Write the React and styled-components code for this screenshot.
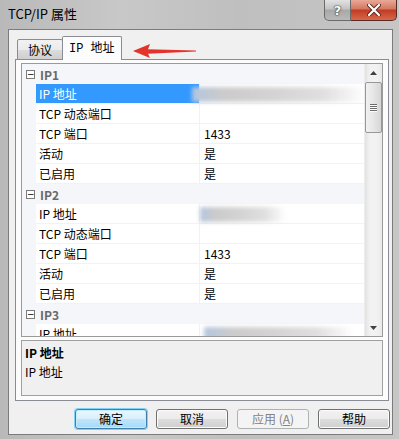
import styled, { createGlobalStyle } from "styled-components";

const GlobalStyle = createGlobalStyle`
  html, body { margin: 0; padding: 0; }
  body {
    font-family: "Noto Sans CJK SC", "Noto Sans", sans-serif;
    font-size: 12px;
    color: #000;
  }
`;

const groups = [
  {
    name: "IP1",
    rows: [
      { label: "IP 地址", smear: { x: -12, w: 174 }, selected: true },
      { label: "TCP 动态端口" },
      { label: "TCP 端口", value: "1433" },
      { label: "活动", value: "是" },
      { label: "已启用", value: "是" },
    ],
  },
  {
    name: "IP2",
    rows: [
      { label: "IP 地址", smear: { x: -4, w: 86 } },
      { label: "TCP 动态端口" },
      { label: "TCP 端口", value: "1433" },
      { label: "活动", value: "是" },
      { label: "已启用", value: "是" },
    ],
  },
  {
    name: "IP3",
    rows: [{ label: "IP 地址", smear: { x: 0, w: 150 } }],
  },
];

const App = () => {
  return (
    <>
      <GlobalStyle />
      <Window>
        <TitleBar>
          <Title>TCP/IP 属性</Title>
          <Caption>
            <HelpButton>?</HelpButton>
            <CloseButton>
              <svg width="14" height="12" viewBox="0 0 14 12">
                <path d="M2 1 L12 11 M12 1 L2 11" stroke="#5a2a20" strokeWidth="4" strokeLinecap="round" />
                <path d="M2 1 L12 11 M12 1 L2 11" stroke="#fff" strokeWidth="2.2" strokeLinecap="round" />
              </svg>
            </CloseButton>
          </Caption>
        </TitleBar>
        <Arrow width="68" height="18" viewBox="0 0 68 18">
          <path d="M1 9 L18 2 L16 7.2 L64 8.4 L64 9.6 L16 11.8 L18 16 Z" fill="#e3342c" />
        </Arrow>
        <Client>
          <TabStrip>
            <Tab>协议</Tab>
            <Tab $active>IP 地址</Tab>
          </TabStrip>
          <Panel>
            <Grid>
              <Rows>
                {groups.map((g) => (
                  <div key={g.name}>
                    <CategoryRow>
                      <Gutter>
                        <Toggle>−</Toggle>
                      </Gutter>
                      <CategoryName>{g.name}</CategoryName>
                    </CategoryRow>
                    {g.rows.map((r, i) => (
                      <PropRow key={i}>
                        <Gutter />
                        <Label $selected={r.selected}>{r.label}</Label>
                        <Value>
                          {r.smear ? (
                            <Smear style={{ marginLeft: r.smear.x, width: r.smear.w }} />
                          ) : (
                            r.value
                          )}
                        </Value>
                      </PropRow>
                    ))}
                  </div>
                ))}
              </Rows>
              <ScrollBar>
                <ScrollArrow>
                  <svg width="7" height="4" viewBox="0 0 7 4">
                    <path d="M0 4 L3.5 0 L7 4 Z" fill="#404040" />
                  </svg>
                </ScrollArrow>
                <Thumb>
                  <Grip />
                  <Grip />
                  <Grip />
                  <Grip />
                </Thumb>
                <Track />
                <ScrollArrow>
                  <svg width="7" height="4" viewBox="0 0 7 4">
                    <path d="M0 0 L7 0 L3.5 4 Z" fill="#404040" />
                  </svg>
                </ScrollArrow>
              </ScrollBar>
            </Grid>
            <Description>
              <DescTitle>IP 地址</DescTitle>
              <DescText>IP 地址</DescText>
            </Description>
          </Panel>
          <Buttons>
            <Button $default>确定</Button>
            <Button>取消</Button>
            <Button disabled>
              应用 (<u>A</u>)
            </Button>
            <Button>帮助</Button>
          </Buttons>
        </Client>
      </Window>
    </>
  );
};

const Window = styled.div`
  position: relative;
  width: 399px;
  height: 439px;
  box-sizing: border-box;
  padding: 0 6px 4px 8px;
  display: flex;
  flex-direction: column;
  background: linear-gradient(to right, #b9b9b9, #c8c8c8 30%, #bfbfbf 60%, #c6c6c6);
  overflow: hidden;
`;

const TitleBar = styled.div`
  height: 29px;
  display: flex;
  align-items: flex-start;
`;

const Title = styled.div`
  margin-top: 5px;
  font-size: 13px;
  line-height: 18px;
  color: #000;
`;

const Caption = styled.div`
  margin-left: auto;
  margin-right: -4px;
  display: flex;
  height: 21px;
`;

const HelpButton = styled.div`
  width: 27px;
  box-sizing: border-box;
  border: 1px solid #6a6a6a;
  border-top: none;
  border-bottom-left-radius: 5px;
  background: linear-gradient(#e2e2e2, #c3c3c3 45%, #a8a8a8 50%, #b9b9b9);
  display: flex;
  align-items: center;
  justify-content: center;
  font-family: "DejaVu Sans", sans-serif;
  font-weight: bold;
  font-size: 13px;
  color: #fff;
  text-shadow: 0 0 2px #333, 0 0 1px #000;
`;

const CloseButton = styled.div`
  width: 46px;
  box-sizing: border-box;
  border: 1px solid #5b2a22;
  border-left: none;
  border-top: none;
  border-bottom-right-radius: 5px;
  background: linear-gradient(#e9a996, #d37760 45%, #c23b22 50%, #d5694c);
  display: flex;
  align-items: center;
  justify-content: center;
`;

const Arrow = styled.svg`
  position: absolute;
  left: 132px;
  top: 42px;
`;

const Client = styled.div`
  flex: 1;
  display: flex;
  flex-direction: column;
  background: #f0f0f0;
  border: 1px solid #7c7c7c;
  padding: 7px 3px 4px 6px;
`;

const TabStrip = styled.div`
  display: flex;
  align-items: flex-end;
  height: 23px;
  padding-left: 2px;
  position: relative;
  z-index: 1;
  margin-bottom: -1px;
`;

const Tab = styled.div`
  box-sizing: border-box;
  height: ${(p) => (p.$active ? "24px" : "21px")};
  padding: 0 ${(p) => (p.$active ? "6px" : "10px")};
  margin-right: ${(p) => (p.$active ? "0" : "-1px")};
  border: 1px solid #898c95;
  border-bottom: ${(p) => (p.$active ? "none" : "1px solid #898c95")};
  border-radius: 2px 2px 0 0;
  background: ${(p) =>
    p.$active ? "#fcfcfc" : "linear-gradient(#f2f2f2, #ebebeb 50%, #dddddd 51%, #cfcfcf)"};
  line-height: 20px;
  font-size: 12px;
  font-family: ${(p) => (p.$active ? '"Liberation Mono", "Noto Sans CJK SC", monospace' : '"Noto Sans CJK SC", sans-serif')};
  ${(p) => (p.$active ? "position: relative; z-index: 2; padding-top: 2px;" : "")}
`;

const Panel = styled.div`
  height: 342px;
  box-sizing: border-box;
  border: 1px solid #898c95;
  background: #fcfcfc;
  padding: 3px 5px 4px 5px;
  display: flex;
  flex-direction: column;
`;

const Grid = styled.div`
  height: 274px;
  box-sizing: border-box;
  border: 1px solid #9a9a9a;
  background: #fff;
  display: flex;
`;

const Rows = styled.div`
  flex: 1;
  overflow: hidden;
`;

const CategoryRow = styled.div`
  height: 20px;
  display: flex;
  align-items: center;
  background: #f4f6fa;
`;

const PropRow = styled.div`
  height: 20px;
  display: grid;
  grid-template-columns: 14px 164px 1fr;
`;

const Gutter = styled.div`
  width: 14px;
  height: 100%;
  display: flex;
  align-items: center;
  justify-content: center;
  background: #f4f6fa;
`;

const Toggle = styled.div`
  width: 9px;
  height: 9px;
  box-sizing: border-box;
  border: 1px solid #7a7a7a;
  background: #fff;
  font-size: 9px;
  line-height: 6px;
  text-align: center;
  color: #000;
  font-family: "DejaVu Sans", sans-serif;
  margin-left: 3px;
`;

const CategoryName = styled.div`
  padding-left: 4px;
  font-weight: bold;
  color: #6a6a6a;
  font-size: 12px;
`;

const Label = styled.div`
  box-sizing: border-box;
  padding-left: 3px;
  line-height: 19px;
  border-bottom: 1px solid #f0f2f5;
  border-right: 1px solid #f0f2f5;
  background: ${(p) => (p.$selected ? "#3399ff" : "transparent")};
  color: ${(p) => (p.$selected ? "#fff" : "#000")};
  white-space: nowrap;
`;

const Value = styled.div`
  box-sizing: border-box;
  padding-left: 4px;
  line-height: 19px;
  border-bottom: 1px solid #f0f2f5;
  white-space: nowrap;
  position: relative;
`;

const Smear = styled.div`
  height: 15px;
  margin-top: 3px;
  filter: blur(2px);
  background: linear-gradient(
    to right,
    #b3c6df,
    #cbcbcb 18%,
    #d3d3d3 45%,
    #dfdfdf 75%,
    rgba(230, 230, 230, 0)
  );
`;

const ScrollBar = styled.div`
  width: 17px;
  display: flex;
  flex-direction: column;
  background: linear-gradient(to right, #e3e3e3, #f2f2f2 30%, #f2f2f2 70%, #e9e9e9);
  border-left: 1px solid #ececec;
`;

const ScrollArrow = styled.div`
  height: 17px;
  display: flex;
  align-items: center;
  justify-content: center;
`;

const Thumb = styled.div`
  margin: 1px 0 0;
  height: 51px;
  box-sizing: border-box;
  border: 1px solid #979797;
  border-radius: 2px;
  background: linear-gradient(to right, #f1f1f1, #e6e6e6 50%, #d6d6d6);
  display: flex;
  flex-direction: column;
  align-items: center;
  justify-content: center;
  gap: 1px;
`;

const Grip = styled.div`
  width: 7px;
  height: 1px;
  background: #6b6b6b;
  box-shadow: 0 1px 0 #fff;
`;

const Track = styled.div`
  flex: 1;
`;

const Description = styled.div`
  flex: 1;
  margin-top: 3px;
  border: 1px solid #a0a0a0;
  background: #f0f0f0;
  padding: 3px 3px;
`;

const DescTitle = styled.div`
  font-weight: bold;
  line-height: 18px;
`;

const DescText = styled.div`
  line-height: 20px;
`;

const Buttons = styled.div`
  margin-top: 8px;
  margin-right: -1px;
  display: flex;
  justify-content: flex-end;
  gap: 9px;
`;

const Button = styled.button`
  width: 72px;
  height: 20px;
  box-sizing: border-box;
  padding: 0;
  font-family: "Noto Sans CJK SC", sans-serif;
  font-size: 12px;
  line-height: 16px;
  border-radius: 3px;
  border: 1px solid ${(p) => (p.$default ? "#3c7fb1" : "#707070")};
  background: ${(p) =>
    p.$default
      ? "linear-gradient(#eaf6fd, #d9f0fc 50%, #bee6fd 51%, #a7d9f5)"
      : "linear-gradient(#f2f2f2, #ebebeb 50%, #dddddd 51%, #cfcfcf)"};
  box-shadow: ${(p) => (p.$default ? "0 0 0 1px #7fd1f5, inset 0 0 0 1px #c6ecfc" : "inset 0 0 0 1px #fbfbfb")};
  color: #000;
  &:disabled {
    border-color: #adb2b5;
    background: #f4f4f4;
    color: #838383;
    box-shadow: none;
  }
  u {
    text-decoration: underline;
  }
`;

export default App;
